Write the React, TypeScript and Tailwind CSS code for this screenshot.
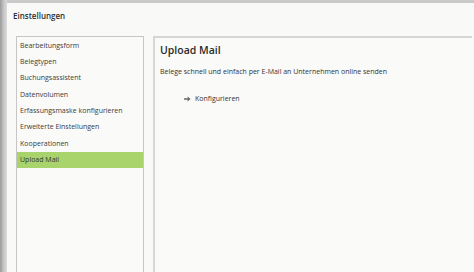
import React from "react";

const items = [
  "Bearbeitungsform",
  "Belegtypen",
  "Buchungsassistent",
  "Datenvolumen",
  "Erfassungsmaske konfigurieren",
  "Erweiterte Einstellungen",
  "Kooperationen",
  "Upload Mail",
];

const App = () => {
  const selected = "Upload Mail";

  return (
    <div
      className="w-[474px] h-[272px] flex overflow-hidden bg-[#f9f9f7] text-[#333]"
      style={{ fontFamily: '"Open Sans", "Noto Sans", sans-serif' }}
    >
      {/* left window edge */}
      <div className="w-[7px] h-full bg-gradient-to-r from-[#9a9a9a] via-[#c4c4c4] to-[#dcdcdc]" />

      <div className="flex-1 flex flex-col">
        <div className="h-[3px] bg-[#c9c9c9]" />

        <div className="h-[33px] pl-[6px] pt-[7px] text-[8px] font-semibold text-[#2f2f2f]">
          Einstellungen
        </div>

        <div className="flex-1 flex gap-[9px] pl-[9px] pr-[2px]">
          {/* menu list */}
          <div className="w-[128px] border border-[#c6c6c6] border-b-0 bg-[#fafaf8] pt-[1px]">
            {items.map((item) => (
              <div
                key={item}
                className={
                  "h-[16.3px] flex items-center pl-[3px] text-[7px] " +
                  (item === selected ? "bg-[#a9d46b] text-[#333]" : "text-[#3a3a3a]")
                }
              >
                {item}
              </div>
            ))}
          </div>

          {/* detail panel */}
          <div className="flex-1 border-t-2 border-l-2 border-[#d6d6d6] bg-[#fafaf8] pl-[5px] pt-[4px]">
            <div className="text-[10.5px] font-semibold text-[#2b2b2b] leading-[16px]">Upload Mail</div>
            <div className="mt-[9px] text-[7px] text-[#333]">
              Belege schnell und einfach per E-Mail an Unternehmen online senden
            </div>
            <div className="mt-[16px] ml-[24px] flex items-center gap-[4px] text-[7px] text-[#333]">
              <svg width="7" height="6" viewBox="0 0 7 6">
                <path d="M0 2.2h3.6V0.4L6.6 3 3.6 5.6V3.8H0z" fill="#6a6a6a" />
              </svg>
              <span>Konfigurieren</span>
            </div>
          </div>
        </div>
      </div>
    </div>
  );
};

export default App;
